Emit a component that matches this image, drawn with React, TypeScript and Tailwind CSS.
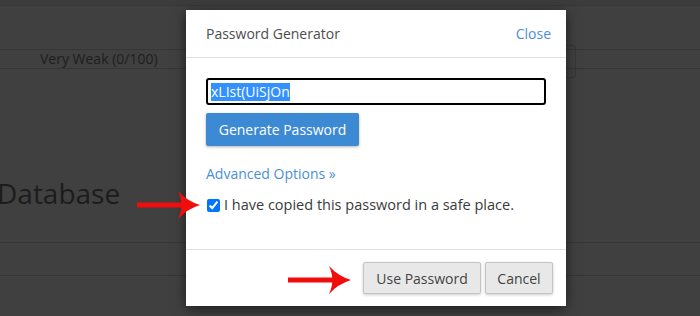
import React from 'react';

const RedArrow: React.FC<{ className?: string }> = ({ className }) => (
    <svg className={className} width="64" height="30" viewBox="0 0 64 30">
        <rect x="0" y="12.5" width="46" height="5" fill="#f20d0d" />
        <path d="M63 15 Q50 19 41 29 Q45 20 44 15 Q45 10 41 1 Q50 11 63 15 Z" fill="#f20d0d" />
    </svg>
);

const GrayButton: React.FC<{ children: React.ReactNode; className?: string }> = ({ children, className }) => (
    <button
        className={`h-[32px] rounded-[2px] border border-[#c4c4c4] bg-[#e8e8e8] text-[14px] text-[#444] shadow-[0_1px_3px_rgba(0,0,0,0.2)] ${className ?? ''}`}
    >
        {children}
    </button>
);

export default function App() {
    return (
        <div className="relative w-[700px] h-[316px] overflow-hidden bg-[#404040] font-['Open_Sans',sans-serif]">
            {/* page behind the overlay */}
            <div className="flex flex-col">
                <div className="h-[6px] border-b border-[#383838] bg-[#3c3c3c]" />
                <div className="h-[44px] border-b border-[#363636]" />
                <div className="h-[19px] border-b border-[#363636] flex items-center">
                    <span className="ml-[40px] text-[14px] leading-none text-[#1e1e1e]">Very Weak (0/100)</span>
                </div>
                <div className="h-[174px] border-b border-[#363636] flex items-end pb-[35px]">
                    <span className="-ml-[3px] text-[28px] leading-none text-[#1c1c1c]">Database</span>
                </div>
                <div className="h-[33px] border-b border-[#363636]" />
            </div>
            <div className="absolute left-[540px] top-[45px] w-[36px] h-[33px] rounded-[3px] border border-[#363636]" />

            {/* modal */}
            <div className="absolute left-[186px] top-[10px] w-[380px] h-[296px] bg-white shadow-[0_3px_12px_rgba(0,0,0,0.55)] flex flex-col">
                <div className="h-[48px] shrink-0 border-b border-[#e3e3e3] flex items-center justify-between pl-[20px] pr-[15px]">
                    <span className="text-[14px] text-[#4d4d4d]">Password Generator</span>
                    <span className="text-[14px] text-[#4a8fd8]">Close</span>
                </div>
                <div className="flex-1 px-[20px] pt-[20px] flex flex-col items-start">
                    <div className="w-[340px] h-[27px] rounded-[3px] border-2 border-black flex items-center pl-[3px]">
                        <span className="bg-[#3390ff] text-white text-[14px] leading-[18px]">xLIst(UiSjOn</span>
                    </div>
                    <button className="mt-[8px] h-[33px] w-[153px] rounded-[2px] bg-[#3c89d4] text-white text-[14px] shadow-[0_1px_3px_rgba(0,0,0,0.3)]">
                        Generate Password
                    </button>
                    <span className="mt-[18px] text-[14px] leading-[20px] text-[#4a8fd8]">Advanced Options »</span>
                    <label className="mt-[11px] flex items-center gap-[4px] text-[14.5px] leading-[20px] text-[#3a3a3a]">
                        <input type="checkbox" defaultChecked className="w-[13px] h-[13px] m-0 ml-[1px]" />
                        I have copied this password in a safe place.
                    </label>
                </div>
                <div className="h-[57px] shrink-0 border-t border-[#e3e3e3] flex items-center justify-end gap-[4px] pr-[13px]">
                    <GrayButton className="w-[118px]">Use Password</GrayButton>
                    <GrayButton className="w-[68px]">Cancel</GrayButton>
                </div>
            </div>

            <RedArrow className="absolute left-[137px] top-[190px]" />
            <RedArrow className="absolute left-[288px] top-[265px]" />
        </div>
    );
}
